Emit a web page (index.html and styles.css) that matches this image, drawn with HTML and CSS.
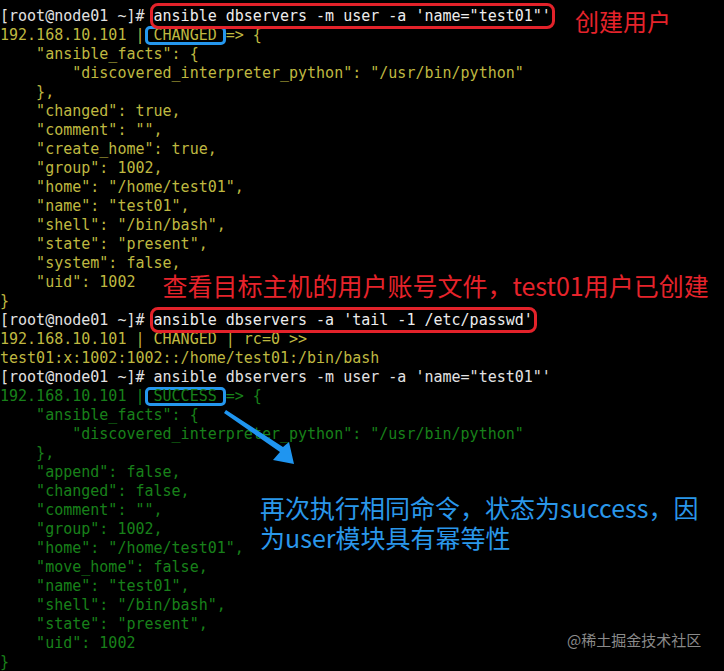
FILE: index.html
```html
<!DOCTYPE html>
<html lang="zh-CN">
<head>
<meta charset="utf-8">
<title>ansible user</title>
<link rel="stylesheet" href="styles.css">
</head>
<body>
<main class="screen">
  <div class="term">
    <div class="ln w">[root@node01 ~]# <span class="cmd">ansible dbservers -m user -a 'name="test01"'</span><span class="note note-1">创建用户</span></div>
    <div class="ln y">192.168.10.101 | <span class="tag">CHANGED</span> =&gt; {</div>
    <div class="ln y">    "ansible_facts": {</div>
    <div class="ln y">        "discovered_interpreter_python": "/usr/bin/python"</div>
    <div class="ln y">    },</div>
    <div class="ln y">    "changed": true,</div>
    <div class="ln y">    "comment": "",</div>
    <div class="ln y">    "create_home": true,</div>
    <div class="ln y">    "group": 1002,</div>
    <div class="ln y">    "home": "/home/test01",</div>
    <div class="ln y">    "name": "test01",</div>
    <div class="ln y">    "shell": "/bin/bash",</div>
    <div class="ln y">    "state": "present",</div>
    <div class="ln y">    "system": false,</div>
    <div class="ln y">    "uid": 1002<span class="note note-2">查看目标主机的用户账号文件，test01用户已创建</span></div>
    <div class="ln y">}</div>
    <div class="ln w">[root@node01 ~]# <span class="cmd">ansible dbservers -a 'tail -1 /etc/passwd'</span></div>
    <div class="ln y">192.168.10.101 | CHANGED | rc=0 &gt;&gt;</div>
    <div class="ln y">test01:x:1002:1002::/home/test01:/bin/bash</div>
    <div class="ln w">[root@node01 ~]# ansible dbservers -m user -a 'name="test01"'</div>
    <div class="ln g">192.168.10.101 | <span class="tag">SUCCESS</span> =&gt; {</div>
    <div class="ln g">    "ansible_facts": {</div>
    <div class="ln g">        "discovered_interpreter_python": "/usr/bin/python"</div>
    <div class="ln g">    },</div>
    <div class="ln g">    "append": false,</div>
    <div class="ln g">    "changed": false,</div>
    <div class="ln g">    "comment": "",</div>
    <div class="ln g">    "group": 1002,</div>
    <div class="ln g">    "home": "/home/test01",</div>
    <div class="ln g">    "move_home": false,</div>
    <div class="ln g">    "name": "test01",</div>
    <div class="ln g">    "shell": "/bin/bash",</div>
    <div class="ln g">    "state": "present",</div>
    <div class="ln g">    "uid": 1002</div>
    <div class="ln g">}</div>
  </div>

  <svg class="arrow" width="80" height="70" viewBox="0 0 80 70" aria-hidden="true">
    <polygon points="6,10 63,47 69,42 74,64 53,60 60,52 4,13" fill="#1f95f0"/>
  </svg>

  <p class="note-blue">再次执行相同命令，状态为success，因<br>为user模块具有幂等性</p>

  <p class="watermark">@稀土掘金技术社区</p>
</main>
</body>
</html>
```
FILE: styles.css
```css
html, body {
  margin: 0;
  padding: 0;
  background: #000;
}

.screen {
  position: relative;
  width: 724px;
  height: 671px;
  overflow: hidden;
  background: #000;
}

.term {
  padding: 7px 0 0 0;
  font-family: "DejaVu Sans Mono", "Liberation Mono", monospace;
  font-size: 15px;
  line-height: 19px;
}

.ln {
  height: 19px;
  white-space: pre;
}

.w { color: #e2e2e2; }
.y { color: #bfb840; }
.g { color: #18801a; }

.cmd {
  color: #ededed;
  outline: 3px solid #e3222a;
  outline-offset: 1px;
  border-radius: 4px;
}

.tag {
  display: inline-block;
  line-height: 13px;
  border: 3px solid #2597ee;
  border-radius: 5px;
  padding: 0 6px;
  margin: 0 -9px;
}

.note {
  font-family: "Noto Sans CJK SC", "Noto Sans", sans-serif;
  color: #e6232b;
  line-height: 0;
  white-space: nowrap;
}

.note-1 {
  font-size: 24px;
  margin-left: 24px;
  vertical-align: -10px;
}

.note-2 {
  font-size: 25px;
  margin-left: 27px;
  vertical-align: -9px;
}

.arrow {
  position: absolute;
  left: 220px;
  top: 400px;
}

.note-blue {
  position: absolute;
  left: 260px;
  top: 492px;
  margin: 0;
  font-family: "Noto Sans CJK SC", "Noto Sans", sans-serif;
  font-size: 25px;
  line-height: 30px;
  color: #2a97ea;
  white-space: nowrap;
}

.watermark {
  position: absolute;
  left: 567px;
  top: 630px;
  margin: 0;
  font-family: "Noto Sans CJK SC", "Noto Sans", sans-serif;
  font-size: 15px;
  line-height: 20px;
  color: #8a8a8a;
  white-space: nowrap;
}
```
